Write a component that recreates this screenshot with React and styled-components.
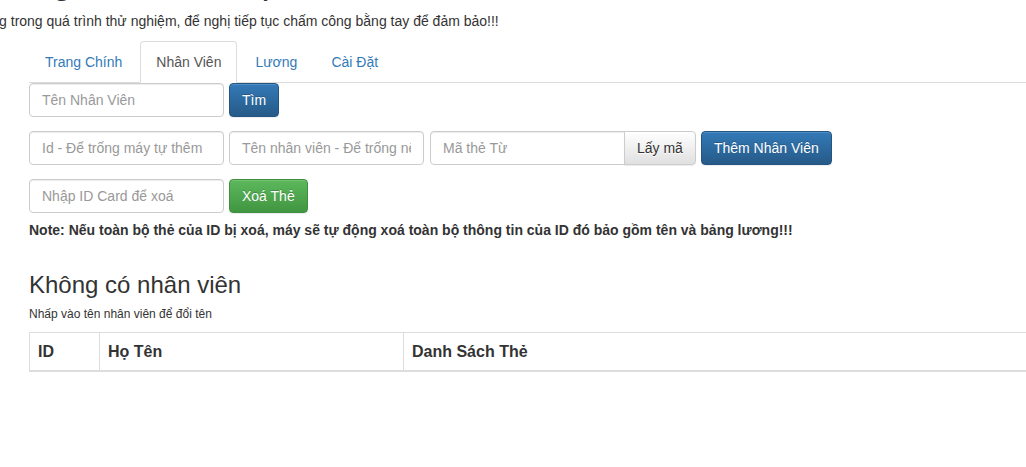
import React from 'react';
import styled, { createGlobalStyle } from 'styled-components';

const Global = createGlobalStyle`
  html, body {
    margin: 0;
    padding: 0;
    overflow: hidden;
    background: #fff;
  }
  body {
    font-family: "Liberation Sans", Arial, Helvetica, sans-serif;
    font-size: 14px;
    line-height: 20px;
    color: #333;
  }
  * { box-sizing: border-box; }
`;

const Page = styled.div`
  width: 1260px;
  padding-left: 29px;
`;

const Header = styled.div`
  margin-left: -29px;
  white-space: nowrap;
`;

const Title = styled.h1`
  margin: -39px 0 0 ${p => p.shift}px;
  font-size: 36px;
  line-height: 40px;
  font-weight: 500;
  color: #333;
`;

const Subtitle = styled.p`
  margin: 10px 0 0 ${p => p.shift}px;
  line-height: 20px;
`;

const Tabs = styled.ul`
  display: flex;
  list-style: none;
  margin: 10px 0 0;
  padding: 0;
  border-bottom: 1px solid #ddd;
`;

const Tab = styled.li`
  margin: 0 2px -1px 0;
  padding: 10px 15px;
  line-height: 20px;
  border: 1px solid ${p => (p.active ? '#ddd' : 'transparent')};
  border-bottom-color: transparent;
  border-radius: 4px 4px 0 0;
  background: ${p => (p.active ? '#fff' : 'transparent')};
  color: ${p => (p.active ? '#555' : '#337ab7')};
  cursor: pointer;
`;

const Form = styled.div`
  display: flex;
  flex-direction: column;
  gap: 14px;
`;

const Row = styled.div`
  display: flex;
  align-items: center;
  gap: 5px;
`;

const Input = styled.input`
  width: ${p => p.w || 195}px;
  height: 34px;
  padding: 6px 12px;
  font-family: inherit;
  font-size: 14px;
  color: #555;
  background: #fff;
  border: 1px solid #ccc;
  border-radius: ${p => (p.grouped ? '4px 0 0 4px' : '4px')};
  box-shadow: inset 0 1px 1px rgba(0, 0, 0, 0.075);
  outline: none;
  &::placeholder { color: #999; }
`;

const InputGroup = styled.div`
  display: flex;
  margin-left: 1px;
`;

const variants = {
  primary: {
    bg: 'linear-gradient(to bottom, #337ab7 0%, #265a88 100%)',
    border: '#245580',
    color: '#fff',
  },
  success: {
    bg: 'linear-gradient(to bottom, #5cb85c 0%, #419641 100%)',
    border: '#3e8f3e',
    color: '#fff',
  },
  default: {
    bg: 'linear-gradient(to bottom, #fff 0%, #e0e0e0 100%)',
    border: '#ccc',
    color: '#333',
  },
};

const Button = styled.button`
  height: 34px;
  padding: 6px 12px;
  font-family: inherit;
  font-size: 14px;
  line-height: 20px;
  color: ${p => variants[p.variant].color};
  background: ${p => variants[p.variant].bg};
  border: 1px solid ${p => variants[p.variant].border};
  border-radius: ${p => (p.grouped ? '0 4px 4px 0' : '4px')};
  box-shadow: inset 0 1px 0 rgba(255, 255, 255, 0.15), 0 1px 1px rgba(0, 0, 0, 0.075);
  text-shadow: ${p => (p.variant === 'default' ? '0 1px 0 #fff' : '0 -1px 0 rgba(0,0,0,0.2)')};
  margin-left: ${p => (p.grouped ? '-1px' : '0')};
  white-space: nowrap;
  cursor: pointer;
`;

const Note = styled.p`
  margin: 7px 0 0;
  font-weight: bold;
  line-height: 20px;
`;

const SectionTitle = styled.h3`
  margin: 31px 0 0;
  font-size: 24px;
  line-height: 27px;
  font-weight: 500;
`;

const Hint = styled.p`
  margin: 8px 0 0;
  font-size: 12px;
  line-height: 17px;
`;

const Table = styled.table`
  margin-top: 9px;
  width: 1200px;
  border-collapse: collapse;
  border: 1px solid #ddd;
`;

const Th = styled.th`
  width: ${p => (p.w ? `${p.w}px` : 'auto')};
  padding: 8px;
  text-align: left;
  font-size: 16px;
  line-height: 21px;
  font-weight: bold;
  border: 1px solid #ddd;
  border-bottom-width: 2px;
`;

export default function App() {
  return (
    <>
      <Global />
      <Page>
        <Header>
          <Title shift={-120}>Chấm Công Độ Trễ Thấp</Title>
          <Subtitle shift={-85}>
            Hệ thống đang trong quá trình thử nghiệm, để nghị tiếp tục chấm công bằng tay để đảm bảo!!!
          </Subtitle>
        </Header>

        <Tabs>
          <Tab>Trang Chính</Tab>
          <Tab active>Nhân Viên</Tab>
          <Tab>Lương</Tab>
          <Tab>Cài Đặt</Tab>
        </Tabs>

        <Form>
          <Row>
            <Input placeholder="Tên Nhân Viên" />
            <Button variant="primary">Tìm</Button>
          </Row>
          <Row>
            <Input placeholder="Id - Để trống máy tự thêm" />
            <Input placeholder="Tên nhân viên - Để trống nếu không đổi" />
            <InputGroup>
              <Input grouped placeholder="Mã thẻ Từ" />
              <Button variant="default" grouped>Lấy mã</Button>
            </InputGroup>
            <Button variant="primary">Thêm Nhân Viên</Button>
          </Row>
          <Row>
            <Input placeholder="Nhập ID Card để xoá" />
            <Button variant="success">Xoá Thẻ</Button>
          </Row>
        </Form>

        <Note>
          Note: Nếu toàn bộ thẻ của ID bị xoá, máy sẽ tự động xoá toàn bộ thông tin của ID đó bảo gồm tên và bảng lương!!!
        </Note>

        <SectionTitle>Không có nhân viên</SectionTitle>
        <Hint>Nhấp vào tên nhân viên để đổi tên</Hint>

        <Table>
          <thead>
            <tr>
              <Th w={70}>ID</Th>
              <Th w={304}>Họ Tên</Th>
              <Th>Danh Sách Thẻ</Th>
            </tr>
          </thead>
        </Table>
      </Page>
    </>
  );
}
